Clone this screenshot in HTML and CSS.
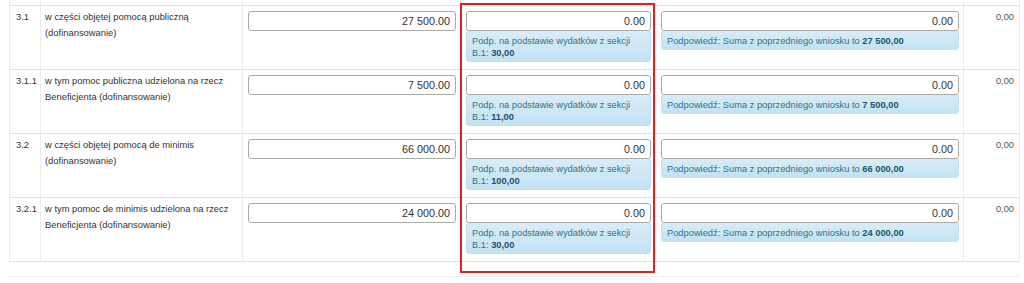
FILE: index.html
```html
<!DOCTYPE html>
<html lang="pl">
<head>
  <meta charset="UTF-8">
  <meta name="viewport" content="width=device-width, initial-scale=1.0">
  <link rel="stylesheet" href="styles.css">
  <title>Pomoc publiczna</title>
</head>
<body>

  <div class="container">
    <table class="grid">
      <colgroup>
        <col class="c-num">
        <col class="c-label">
        <col class="c-amount">
        <col class="c-spent">
        <col class="c-prev">
        <col class="c-total">
      </colgroup>
      <tr class="spacer">
        <td></td><td></td><td></td><td></td><td></td><td></td>
      </tr>
      <tr>
        <td class="num">3.1</td>
        <td class="label">w części objętej pomocą publiczną (dofinansowanie)</td>
        <td><input class="amount" type="text" value="27 500.00"></td>
        <td>
          <input class="amount" type="text" value="0.00">
          <div class="hint">Podp. na podstawie wydatków z sekcji B.1: <b>30,00</b></div>
        </td>
        <td>
          <input class="amount" type="text" value="0.00">
          <div class="hint">Podpowiedź: Suma z poprzedniego wniosku to <b>27 500,00</b></div>
        </td>
        <td class="total">0,00</td>
      </tr>
      <tr>
        <td class="num">3.1.1</td>
        <td class="label">w tym pomoc publiczna udzielona na rzecz Beneficjenta (dofinansowanie)</td>
        <td><input class="amount" type="text" value="7 500.00"></td>
        <td>
          <input class="amount" type="text" value="0.00">
          <div class="hint">Podp. na podstawie wydatków z sekcji B.1: <b>11,00</b></div>
        </td>
        <td>
          <input class="amount" type="text" value="0.00">
          <div class="hint">Podpowiedź: Suma z poprzedniego wniosku to <b>7 500,00</b></div>
        </td>
        <td class="total">0,00</td>
      </tr>
      <tr>
        <td class="num">3.2</td>
        <td class="label">w części objętej pomocą de minimis (dofinansowanie)</td>
        <td><input class="amount" type="text" value="66 000.00"></td>
        <td>
          <input class="amount" type="text" value="0.00">
          <div class="hint">Podp. na podstawie wydatków z sekcji B.1: <b>100,00</b></div>
        </td>
        <td>
          <input class="amount" type="text" value="0.00">
          <div class="hint">Podpowiedź: Suma z poprzedniego wniosku to <b>66 000,00</b></div>
        </td>
        <td class="total">0,00</td>
      </tr>
      <tr>
        <td class="num">3.2.1</td>
        <td class="label">w tym pomoc de minimis udzielona na rzecz Beneficjenta (dofinansowanie)</td>
        <td><input class="amount" type="text" value="24 000.00"></td>
        <td>
          <input class="amount" type="text" value="0.00">
          <div class="hint">Podp. na podstawie wydatków z sekcji B.1: <b>30,00</b></div>
        </td>
        <td>
          <input class="amount" type="text" value="0.00">
          <div class="hint">Podpowiedź: Suma z poprzedniego wniosku to <b>24 000,00</b></div>
        </td>
        <td class="total">0,00</td>
      </tr>
    </table>
    <div class="next"></div>

    <div class="highlight"></div>
  </div>

</body>
</html>
```

FILE: styles.css
```css
* {
  margin: 0;
  padding: 0;
  box-sizing: border-box;
}

body {
  background-color: #fff;
  font-family: "Liberation Sans", Arial, sans-serif;
  color: #333;
}

.container {
  position: relative;
  margin: 0 5px 0 9px;
}

.grid {
  width: 1010px;
  border-collapse: collapse;
  table-layout: fixed;
}

.c-num { width: 31px; }
.c-label { width: 202px; }
.c-amount { width: 218px; }
.c-spent { width: 195px; }
.c-prev { width: 308px; }
.c-total { width: 56px; }

.grid td {
  border-left: 1px solid #ececec;
  border-right: 1px solid #ececec;
  border-bottom: 1px solid #e2e2e2;
  padding: 5px 4px 6.5px 5px;
  vertical-align: top;
  font-size: 9.4px;
  line-height: 16px;
}

.grid .spacer td {
  height: 5px;
  padding: 0;
}

.grid td.num,
.grid td.label,
.grid td.total {
  padding-top: 3px;
}

.grid td.num {
  padding-left: 6px;
  padding-right: 2px;
}

.grid td.label {
  padding-left: 4px;
}

.amount {
  display: block;
  width: 100%;
  height: 20px;
  border: 1px solid #aaa;
  border-radius: 3px;
  padding: 0 5px;
  text-align: right;
  font-family: "Liberation Sans", Arial, sans-serif;
  font-size: 10.8px;
  color: #333;
  background: #fff;
}

.amount:focus {
  outline: none;
}

.hint {
  background: linear-gradient(#d9edf7, #c2e3f3);
  border: 1px solid #c0e1f0;
  border-top: none;
  border-radius: 0 0 4px 4px;
  color: #31708f;
  font-size: 9.3px;
  line-height: 12px;
  padding: 4px 8px 2.5px 5px;
}

.hint b {
  color: #245269;
}

.grid td.total {
  text-align: right;
  color: #555;
  font-size: 9.3px;
  padding-right: 5px;
}

.next {
  margin-top: 14px;
  border-top: 1px solid #eee;
  width: 1010px;
}

.highlight {
  position: absolute;
  left: 451px;
  top: 3px;
  width: 195px;
  height: 270px;
  border: 2px solid #e02128;
  pointer-events: none;
}
```
